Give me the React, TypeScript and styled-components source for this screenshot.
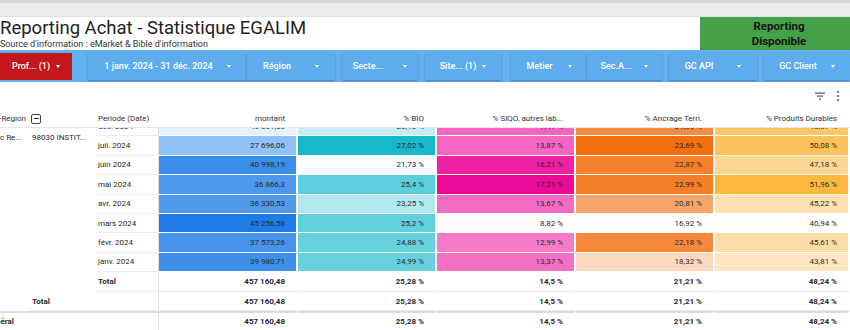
import React from 'react';
import styled, { createGlobalStyle } from 'styled-components';

const GlobalStyle = createGlobalStyle`
  html, body { margin: 0; padding: 0; background: #fff; }
  body { font-family: Roboto, "Liberation Sans", Arial, sans-serif; overflow: hidden; }
  * { box-sizing: border-box; }
`;

const COLS = '30px 66px 63px 139px 139px 139px 139px 135px';

const Page = styled.div`
  width: 850px;
  height: 330px;
  overflow: hidden;
  background: #fff;
  display: flex;
  flex-direction: column;
`;

const BrowserStrip = styled.div`
  height: 17px;
  flex: none;
  background: #ececef;
  border-top: 3px solid #d7d7db;
  border-bottom: 1px solid #e1e1e4;
`;

const HeaderRow = styled.div`
  height: 33px;
  flex: none;
  display: flex;
  justify-content: space-between;
`;

const TitleBlock = styled.div`
  padding-top: 1px;
  display: flex;
  flex-direction: column;
`;

const Title = styled.h1`
  margin: 0;
  font-size: 18.5px;
  line-height: 21px;
  font-weight: 400;
  color: #1e1e1e;
  white-space: nowrap;
`;

const Subtitle = styled.div`
  font-size: 9px;
  line-height: 10px;
  color: #333;
  white-space: nowrap;
`;

const StatusBadge = styled.div`
  width: 150px;
  background: #45a147;
  display: flex;
  align-items: center;
  justify-content: center;
  text-align: center;
  font-size: 11.5px;
  line-height: 15px;
  font-weight: 700;
  color: #141414;
  padding-left: 8px;
`;

const FilterBar = styled.div`
  height: 32px;
  flex: none;
  background: #63b0f1;
  display: flex;
  align-items: center;
`;

const FilterButton = styled.div<{ $w: number; $ml?: number; $gap: number; $red?: boolean }>`
  width: ${p => p.$w}px;
  margin-left: ${p => p.$ml ?? 0}px;
  height: 27px;
  flex: none;
  background: ${p => (p.$red ? '#c1171d' : '#5eabee')};
  box-shadow: ${p => (p.$red ? 'none' : '0 1px 2px rgba(0,0,0,0.28)')};
  color: #fff;
  font-size: 9px;
  font-weight: 500;
  display: flex;
  align-items: center;
  justify-content: center;
  gap: ${p => p.$gap}px;
  white-space: nowrap;
`;

const Caret = styled.span`
  width: 0;
  height: 0;
  border-left: 2.5px solid transparent;
  border-right: 2.5px solid transparent;
  border-top: 3px solid #fff;
`;

const Toolbar = styled.div`
  height: 28px;
  flex: none;
  display: flex;
  align-items: center;
  justify-content: flex-end;
  gap: 10px;
  padding-right: 10px;
`;

const HeaderGrid = styled.div`
  height: 18px;
  flex: none;
  display: grid;
  grid-template-columns: ${COLS};
  border-bottom: 1px solid #e6e6e6;
  font-size: 8px;
  color: #333;
`;

const DimHeader = styled.div`
  grid-column: span 2;
  display: flex;
  align-items: center;
  gap: 5px;
`;

const ClipLeft = styled.div<{ $w: number }>`
  width: ${p => p.$w}px;
  overflow: hidden;
  display: flex;
  justify-content: flex-end;
  white-space: nowrap;
  flex: none;
`;

const CollapseBox = styled.span`
  width: 10px;
  height: 10px;
  border: 1px solid #444;
  border-radius: 2px;
  display: flex;
  align-items: center;
  justify-content: center;
  &::after {
    content: '';
    width: 5px;
    height: 1.2px;
    background: #333;
  }
`;

const PeriodHeader = styled.div`
  display: flex;
  align-items: center;
  padding-left: 2px;
  white-space: nowrap;
`;

const ValueHeader = styled.div`
  display: flex;
  align-items: center;
  justify-content: flex-end;
  padding-right: 11px;
  border-right: 2px solid #fff;
  white-space: nowrap;
`;

const BodyViewport = styled.div`
  flex: 1;
  overflow: hidden;
`;

const BodyGrid = styled.div`
  display: grid;
  grid-template-columns: ${COLS};
  grid-template-rows: repeat(8, 19.4px) 20px 19px 19px;
  margin-top: -11px;
  font-size: 8px;
  color: #2a2a2a;
`;

const GroupLabel = styled.div<{ $col: number; $span: number }>`
  grid-column: ${p => p.$col};
  grid-row: 1 / span ${p => p.$span};
  padding: 16px 0 0 ${p => (p.$col === 1 ? 0 : 2)}px;
  line-height: 10px;
  white-space: nowrap;
  overflow: hidden;
`;

const PeriodCell = styled.div<{ $bold?: boolean }>`
  grid-column: 3;
  display: flex;
  align-items: center;
  padding-left: 2px;
  border-right: 1px solid #e2e2e2;
  border-bottom: 1px solid #ececec;
  font-weight: ${p => (p.$bold ? 700 : 400)};
  white-space: nowrap;
`;

const ValueCell = styled.div<{ $bg: string }>`
  display: flex;
  align-items: center;
  justify-content: flex-end;
  padding-right: 11px;
  background: ${p => p.$bg};
  background-clip: padding-box;
  border-right: 2px solid #fff;
  border-bottom: 1px solid #fff;
  white-space: nowrap;
`;

const TotalLabel = styled.div<{ $from: number; $thick?: boolean }>`
  grid-column: ${p => p.$from} / 4;
  display: flex;
  align-items: center;
  padding-left: ${p => (p.$from === 1 ? 0 : 2)}px;
  font-weight: 700;
  white-space: nowrap;
  border-right: 1px solid #e2e2e2;
  border-bottom: ${p => (p.$thick ? 'none' : '1px solid #ececec')};
  border-top: ${p => (p.$thick ? '2px solid #dcdcdc' : 'none')};
`;

const TotalCell = styled.div<{ $thick?: boolean }>`
  display: flex;
  align-items: center;
  justify-content: flex-end;
  padding-right: 11px;
  font-weight: 700;
  border-right: 2px solid #fff;
  border-bottom: ${p => (p.$thick ? 'none' : '1px solid #e9e9e9')};
  border-top: ${p => (p.$thick ? '2px solid #dcdcdc' : 'none')};
  white-space: nowrap;
`;

type Row = { p: string; v: [string, string][] };

const rows: Row[] = [
  { p: 'déc. 2024', v: [['46 651,58', '#e4f0fc'], ['26,18 %', '#c5edf2'], ['7,47 %', '#f566c1'], ['21,86 %', '#f78c42'], ['46,87 %', '#fec868']] },
  { p: 'juil. 2024', v: [['27 696,06', '#90c2f6'], ['27,02 %', '#16b8cb'], ['13,87 %', '#f565c1'], ['23,69 %', '#f36f0e'], ['50,08 %', '#fdc25c']] },
  { p: 'juin 2024', v: [['40 998,19', '#3a8de9'], ['21,73 %', '#fbfdfe'], ['16,21 %', '#ee20a4'], ['22,87 %', '#f5812d'], ['47,18 %', '#fed795']] },
  { p: 'mai 2024', v: [['36 866,3', '#4d98ec'], ['25,4 %', '#5ccfdc'], ['17,21 %', '#ea0a97'], ['22,99 %', '#f57f29'], ['51,96 %', '#fdb840']] },
  { p: 'avr. 2024', v: [['36 330,53', '#509aec'], ['23,25 %', '#b2e8ee'], ['13,67 %', '#f56bc3'], ['20,81 %', '#f8a56c'], ['45,22 %', '#fee1b2']] },
  { p: 'mars 2024', v: [['45 256,58', '#1f7be5'], ['25,2 %', '#60d0dd'], ['8,82 %', '#fffbfd'], ['16,92 %', '#fffdfb'], ['40,94 %', '#fffefb']] },
  { p: 'févr. 2024', v: [['37 573,26', '#4893eb'], ['24,88 %', '#66d2de'], ['12,99 %', '#f57bc9'], ['22,18 %', '#f6893c'], ['45,61 %', '#fedca7']] },
  { p: 'janv. 2024', v: [['39 980,71', '#3e8fea'], ['24,99 %', '#66d2de'], ['13,37 %', '#f570c5'], ['18,32 %', '#fcd8bf'], ['43,81 %', '#fee6c3']] },
];

const totals = ['457 160,48', '25,28 %', '14,5 %', '21,21 %', '48,24 %'];

const filters = [
  { label: 'Prof... (1)', w: 72, ml: 0, gap: 6, red: true },
  { label: '1 janv. 2024 - 31 déc. 2024', w: 159, ml: 16, gap: 14 },
  { label: 'Région', w: 88, ml: 0, gap: 24 },
  { label: 'Secte...', w: 76, ml: 7, gap: 20 },
  { label: 'Site... (1)', w: 76, ml: 7, gap: 6 },
  { label: 'Metier', w: 76, ml: 10, gap: 15 },
  { label: 'Sec.A...', w: 75, ml: 0, gap: 13 },
  { label: 'GC API', w: 88, ml: 7, gap: 24 },
  { label: 'GC Client', w: 86, ml: 7, gap: 14 },
];

const FilterIcon = () => (
  <svg width="12" height="10" viewBox="0 0 12 10">
    <rect x="1" y="1.5" width="10" height="1.2" fill="#555" />
    <rect x="3" y="4.5" width="6" height="1.2" fill="#555" />
    <rect x="5" y="7.5" width="2" height="1.2" fill="#555" />
  </svg>
);

const MoreIcon = () => (
  <svg width="4" height="12" viewBox="0 0 4 12">
    <circle cx="2" cy="2" r="1.1" fill="#555" />
    <circle cx="2" cy="6" r="1.1" fill="#555" />
    <circle cx="2" cy="10" r="1.1" fill="#555" />
  </svg>
);

export default function App() {
  return (
    <Page>
      <GlobalStyle />
      <BrowserStrip />
      <HeaderRow>
        <TitleBlock>
          <Title>Reporting Achat - Statistique EGALIM</Title>
          <Subtitle>Source d'information : eMarket &amp; Bible d'information</Subtitle>
        </TitleBlock>
        <StatusBadge>
          Reporting
          <br />
          Disponible
        </StatusBadge>
      </HeaderRow>
      <FilterBar>
        {filters.map(f => (
          <FilterButton key={f.label} $w={f.w} $ml={f.ml} $gap={f.gap} $red={f.red}>
            {f.label}
            <Caret />
          </FilterButton>
        ))}
      </FilterBar>
      <Toolbar>
        <FilterIcon />
        <MoreIcon />
      </Toolbar>
      <HeaderGrid>
        <DimHeader>
          <ClipLeft $w={26}>Sous-Region</ClipLeft>
          <CollapseBox />
        </DimHeader>
        <PeriodHeader>Periode (Date)</PeriodHeader>
        <ValueHeader>montant</ValueHeader>
        <ValueHeader>% BIO</ValueHeader>
        <ValueHeader>% SIQO, autres lab...</ValueHeader>
        <ValueHeader>% Ancrage Terri.</ValueHeader>
        <ValueHeader>% Produits Durables</ValueHeader>
      </HeaderGrid>
      <BodyViewport>
        <BodyGrid>
          <GroupLabel $col={1} $span={10}>c Re...</GroupLabel>
          <GroupLabel $col={2} $span={9}>98030 INSTIT...</GroupLabel>
          {rows.map(r => (
            <React.Fragment key={r.p}>
              <PeriodCell>{r.p}</PeriodCell>
              {r.v.map(([val, bg], i) => (
                <ValueCell key={i} $bg={bg}>{val}</ValueCell>
              ))}
            </React.Fragment>
          ))}
          <PeriodCell $bold>Total</PeriodCell>
          {totals.map((t, i) => (
            <TotalCell key={'a' + i}>{t}</TotalCell>
          ))}
          <TotalLabel $from={2}>Total</TotalLabel>
          {totals.map((t, i) => (
            <TotalCell key={'b' + i}>{t}</TotalCell>
          ))}
          <TotalLabel $from={1} $thick>
            <ClipLeft $w={14}>Total général</ClipLeft>
          </TotalLabel>
          {totals.map((t, i) => (
            <TotalCell key={'c' + i} $thick>{t}</TotalCell>
          ))}
        </BodyGrid>
      </BodyViewport>
    </Page>
  );
}
